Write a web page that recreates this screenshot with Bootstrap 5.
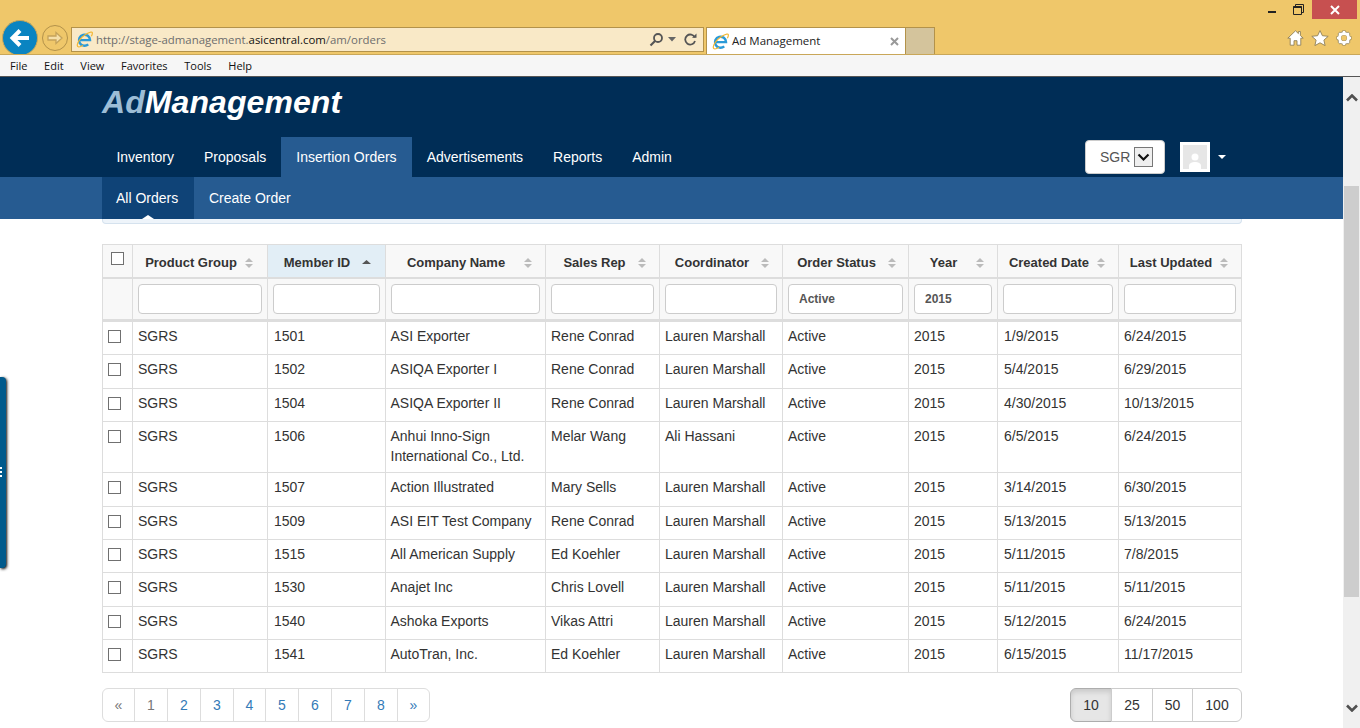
<!DOCTYPE html>
<html lang="en">
<head>
<meta charset="utf-8">
<title>Ad Management</title>
<link href="https://cdn.jsdelivr.net/npm/bootstrap@5.3.0/dist/css/bootstrap.min.css" rel="stylesheet">
<style>
html,body{height:728px;overflow:hidden}
body{font-family:"Liberation Sans",Arial,sans-serif;font-size:14px;color:#333;background:#fff}
.ie-top{background:#efc76a;height:55px;border-bottom:1px solid #c9a759;font-family:"Open Sans","Noto Sans",sans-serif;overflow:hidden}
.ie-winbar{height:27px;padding-right:3px}
.ie-min{width:8px;height:2px;background:#222;margin:11px 17px 0 0}
.ie-restore{margin:4px 8px 0 0}
.ie-close{width:45px;height:19px;background:#c75050;color:#fff}
.ie-addrow{height:27px}
.ie-back{width:36px;height:36px;border-radius:50%;background:#0a84c1;margin:-7px 0 0 2px;flex:none;border:1px solid #c9a759}
.ie-fwd{width:26px;height:26px;border-radius:50%;border:1px solid #b3924a;margin:-2px 3px 0 4px;flex:none}
.ie-addr{width:633px;height:25px;background:#f9e9c7;border:1px solid #b3924a;font-size:11.4px;color:#6d6d6d;padding:0 6px 0 4px;flex:none}
.ie-addr b{font-weight:400;color:#111}
.ie-addr .me-1,.ie-tab .me-1{margin-right:3px!important}
.ie-tab{width:200px;height:27px;background:#fff;border:1px solid #b3924a;border-bottom:0;margin-left:2px;font-size:11.5px;color:#222;padding:0 6px 0 5px;flex:none}
.ie-stub{width:29px;height:27px;background:#d4c49c;border:1px solid #b3924a;border-width:1px 1px 0 0;flex:none}
.ie-tools{margin-right:8px;gap:7px;padding-top:3px}
.ie-menu{height:22px;background:#f6f6f6;border-bottom:1px solid #555;font-family:"Open Sans","Noto Sans",sans-serif;font-size:11px;color:#111;padding:1px 0 0 10px;gap:16.7px}
.view-wrap{height:651px}
.page-main{width:1343px;flex:none;overflow:hidden;position:relative}
.scroll-rail{width:17px;flex:none;background:#f0f0f0}
.scroll-thumb{width:15px;height:411px;background:#cdcdcd;margin:84px 0 0 1px}
.scroll-up{height:25px;padding-top:17px}
.app-head{height:100px;background:#002d56;padding-left:101.4px}
.app-logo{height:60px;padding:6px 0 0 .6px;font-size:32px;line-height:39px;font-weight:700;font-style:italic;color:#fff;letter-spacing:.08px}
.app-logo span{color:#9cbdd6}
.app-nav{height:40px}
.app-nav a{display:block;padding:10px 15px;line-height:20px;color:#fff;text-decoration:none}
.app-nav a.here{background:#265b91}
.sgr-box{width:80px;height:34px;background:#fff;border:1px solid #ccc;border-radius:4px;color:#555;padding-left:14px;margin:3px 0 0 0;gap:4px}
.sgr-arrow{width:19px;height:20px;border:1px solid #777;background:#efefef}
.avatar{width:30px;height:30px;border:3px solid #fff;background:#e6e6e6;margin:5px 0 0 15px}
.av-caret{width:0;height:0;border:4.5px solid transparent;border-top-color:#fff;border-bottom:0;margin:18px 117px 0 8px}
.sub-nav{height:42px;background:#265b91;padding-left:102px}
.sub-nav a{display:block;padding:11px 15px;line-height:20px;color:#fff;text-decoration:none;position:relative;white-space:nowrap}
.sub-nav a.here{background:#0f4377;width:92px;padding-left:14px}
.sub-nav a.here::after{content:"";position:absolute;left:40px;bottom:0;border:6px solid transparent;border-top:0;border-bottom:4px solid #fff}
.panel-stub{height:5px;margin:0 101px 0 102px;background:#eef4fa;border:1px solid #d5e2ee;border-top:0;border-radius:0 0 4px 4px}
.grid-wrap{margin:20px 101px 0 102px}
.order-grid{table-layout:fixed;width:1139px;margin:0;color:#333;--bs-table-border-color:#ddd}
.order-grid col:nth-child(1){width:30px}
.order-grid col:nth-child(2){width:135px}
.order-grid col:nth-child(3){width:118px}
.order-grid col:nth-child(4){width:160px}
.order-grid col:nth-child(5){width:114px}
.order-grid col:nth-child(6){width:123px}
.order-grid col:nth-child(7){width:126px}
.order-grid col:nth-child(8){width:89px}
.order-grid col:nth-child(9){width:121px}
.order-grid col:nth-child(10){width:123px}
.order-grid th,.order-grid td{padding:0 5px;line-height:20px;vertical-align:top;border:1px solid #ddd}
.order-grid .head-row th{height:33px;background:#f8f8f8;font-weight:700;font-size:13px;vertical-align:middle;text-align:center;border-bottom:2px solid #ddd;white-space:nowrap;padding:5px 5px 0}
.order-grid .head-row th.sorted{background:#e2eef6}
.order-grid .filter-row th{height:43px;background:#f8f8f8;border-bottom:3px solid #ddd;vertical-align:middle;padding:1px 5px 0}
.order-grid tbody td{height:33.4px;padding:4px 5px 6px;white-space:nowrap}
.order-grid tbody tr:first-child td{height:34.4px}
.order-grid tbody tr:last-child td{height:32.4px}
.order-grid tbody td.wrap-cell{white-space:normal}
.order-grid tbody td:first-child{padding:8px 0 0 5px;line-height:1}
.order-grid tbody td:nth-child(3),.order-grid tbody td:nth-child(9){padding-left:6px}
.order-grid tbody td:nth-child(4){padding-left:4.500px}
.order-grid th:first-child{padding:0;text-align:center}
.sort-mark{display:inline-block;margin-left:8px;vertical-align:-1px}
.order-grid .head-row th:nth-child(2){padding-right:7px}
.order-grid .head-row th:nth-child(3){padding-left:7px}
.order-grid .head-row th:nth-child(4){padding-left:13px}
.order-grid .head-row th:nth-child(5){padding-left:9px}
.order-grid .head-row th:nth-child(6),.order-grid .head-row th:nth-child(7){padding-left:7px}
.order-grid .head-row th:nth-child(8){padding-left:13px}
.order-grid .head-row th:nth-child(9),.order-grid .head-row th:nth-child(10){padding-right:7px}
.head-row th:nth-child(3) .sort-mark{margin-left:12px}
.head-row th:nth-child(4) .sort-mark{margin-left:19px}
.head-row th:nth-child(5) .sort-mark,.head-row th:nth-child(6) .sort-mark{margin-left:12px}
.head-row th:nth-child(7) .sort-mark{margin-left:12px}
.head-row th:nth-child(8) .sort-mark{margin-left:19px}
.head-lab{display:inline-block}
.filter-input{display:block;width:100%;height:30px;border:1px solid #ccc;border-radius:4px;background:#fff;padding:0 10px;font:700 12px/28px "Liberation Sans",Arial,sans-serif;color:#555}
.tick{appearance:none;display:block;width:13px;height:13px;border:1px solid #707070;background:#fff;margin:0}
.head-tick{margin:-4px auto 0 8px}
.pager-row{margin-top:15px}
.pager-row .page-link{padding:6px 0;width:34px;margin-left:-1px;text-align:center;line-height:20px;font-size:14px;color:#337ab7;border-color:#ddd;background:#fff}
.pager-row .page-link.muted{color:#777}
.pager-row .page-link.first-link{width:33px;margin-left:0}
.pager-row .page-item:nth-child(5) .page-link,.pager-row .page-item:last-child .page-link{width:33px}
.size-btn{padding:6px 0;font-size:14px;line-height:20px;border:1px solid #ccc;color:#333;background:#fff;width:42px;flex:none}
.size-btn.narrow{width:41px}
.size-btn.wide{width:50px}
.size-btn.now{background:#e6e6e6;box-shadow:inset 0 3px 5px rgba(0,0,0,.125);border-color:#adadad}
.side-tab{position:absolute;left:0;top:300px;width:6px;height:191px;background:#005a8c;border-radius:0 4px 4px 0;box-shadow:1px 1px 3px #000}
.side-grip{position:absolute;left:0;top:90px;width:2px;height:10px;background:repeating-linear-gradient(#fff 0 2px,transparent 2px 4px)}
</style>
</head>
<body>
<div class="ie-top">
  <div class="ie-winbar d-flex justify-content-end align-items-start">
    <div class="ie-min"></div>
    <svg class="ie-restore" width="11" height="11" viewBox="0 0 11 11"><path d="M2.500 2V.5h8v8H9M.5 2.500h8v8h-8z" fill="none" stroke="#222" stroke-width="1"/><path d="M.5 3h8" stroke="#222" stroke-width="2"/></svg>
    <div class="ie-close d-flex align-items-center justify-content-center"><svg width="10" height="10" viewBox="0 0 10 10"><path d="M1 1l8 8M9 1l-8 8" stroke="#fff" stroke-width="2"/></svg></div>
  </div>
  <div class="ie-addrow d-flex align-items-start">
    <div class="ie-back d-flex align-items-center justify-content-center"><svg width="22" height="20" viewBox="0 0 22 20"><path d="M20 10H4M11 2.500L3.500 10l7.500 7.500" fill="none" stroke="#fff" stroke-width="4"/></svg></div>
    <div class="ie-fwd d-flex align-items-center justify-content-center"><svg width="16" height="14" viewBox="0 0 16 14"><path d="M1 5h8V1.500L15 7l-6 5.500V9H1z" fill="#f5dfa8" stroke="#c5a35a" stroke-width="1.300"/></svg></div>
    <div class="ie-addr d-flex align-items-center">
      <svg class="me-1" width="17" height="17" viewBox="0 0 16 16"><path d="M2.800 8.600h10.400A5.200 5.200 0 1 0 11.500 12.500" fill="none" stroke="#2a9ad8" stroke-width="2.300"/><path d="M1.500 14.500C0 12 5 4 14 1c2-.5 1.500 2 .5 4M1.500 14.500c1 1 3.500 0 5-1" fill="none" stroke="#f3b52c" stroke-width="1.100"/></svg>
      <span>http://stage-admanagement.<b>asicentral.com</b>/am/orders</span>
      <svg class="ms-auto" width="15" height="15" viewBox="0 0 15 15"><circle cx="9" cy="6" r="4" fill="none" stroke="#555" stroke-width="1.800"/><path d="M6 9l-4.500 4.500" stroke="#555" stroke-width="2.200"/></svg>
      <svg class="ms-1" width="8" height="5" viewBox="0 0 8 5"><path d="M0 0h8L4 4.500z" fill="#666"/></svg>
      <svg class="ms-2" width="13" height="13" viewBox="0 0 13 13"><path d="M10.800 4.500A5 5 0 1 0 11 8" fill="none" stroke="#555" stroke-width="1.800"/><path d="M8 4.800h4.500V.5z" fill="#555"/></svg>
    </div>
    <div class="ie-tab d-flex align-items-center">
      <svg class="me-1" width="17" height="17" viewBox="0 0 16 16"><path d="M2.800 8.600h10.400A5.200 5.200 0 1 0 11.500 12.500" fill="none" stroke="#2a9ad8" stroke-width="2.300"/><path d="M1.500 14.500C0 12 5 4 14 1c2-.5 1.500 2 .5 4M1.500 14.500c1 1 3.500 0 5-1" fill="none" stroke="#f3b52c" stroke-width="1.100"/></svg>
      <span>Ad Management</span>
      <svg class="ms-auto" width="9" height="9" viewBox="0 0 9 9"><path d="M1 1l7 7M8 1L1 8" stroke="#999" stroke-width="2"/></svg>
    </div>
    <div class="ie-stub"></div>
    <div class="ie-tools ms-auto d-flex align-items-center">
      <svg width="17" height="16" viewBox="0 0 17 16"><path d="M8.500.8L.8 8.200h2.400V15.200h3.800v-4.500h3v4.500h3.800V8.200h2.400l-2.800-2.700V1.500h-2v2.100z" fill="#fff" stroke="#8f8058" stroke-width=".9"/></svg>
      <svg width="18" height="16" viewBox="0 0 18 16"><path d="M9 .6l2.400 5.100 5.800.6-4.300 3.800 1.200 5.500L9 12.800l-5.100 2.800 1.200-5.500L.8 6.300l5.800-.6z" fill="#fff" stroke="#8f8058" stroke-width=".9"/></svg>
      <svg width="16" height="16" viewBox="0 0 16 16"><circle cx="8" cy="8" r="4.800" fill="none" stroke="#8f8058" stroke-width="4"/><path d="M8 .5v3M8 12.500v3M.5 8h3M12.500 8h3M2.700 2.700l2.200 2.200M11.100 11.100l2.200 2.200M2.700 13.300l2.200-2.200M11.100 4.900l2.200-2.200" stroke="#8f8058" stroke-width="3.400"/><circle cx="8" cy="8" r="4.600" fill="none" stroke="#fff" stroke-width="3"/><path d="M8 1v3M8 12v3M1 8h3M12 8h3M3.100 3.100l2 2M10.900 10.900l2 2M3.100 12.900l2-2M10.900 5.100l2-2" stroke="#fff" stroke-width="2.500"/></svg>
    </div>
  </div>
</div>
<div class="ie-menu d-flex align-items-center"><span>File</span><span>Edit</span><span>View</span><span>Favorites</span><span>Tools</span><span>Help</span></div>
<div class="view-wrap d-flex">
  <div class="page-main">
    <header class="app-head">
      <div class="app-logo"><span>Ad</span>Management</div>
      <div class="app-nav d-flex">
        <a href="#">Inventory</a><a href="#">Proposals</a><a href="#" class="here">Insertion Orders</a><a href="#">Advertisements</a><a href="#">Reports</a><a href="#">Admin</a>
        <div class="ms-auto d-flex align-items-start">
          <div class="sgr-box d-flex align-items-center"><span>SGR</span><span class="sgr-arrow d-flex align-items-center justify-content-center"><svg width="13" height="9" viewBox="0 0 13 9"><path d="M1.500 1.500l5 5 5-5" fill="none" stroke="#111" stroke-width="2.200"/></svg></span></div>
          <div class="avatar d-flex align-items-end justify-content-center"><svg width="14" height="18" viewBox="0 0 14 18"><circle cx="7" cy="6" r="3.500" fill="#fff"/><path d="M1 18v-3c0-3 3-4 6-4s6 1 6 4v3z" fill="#fff"/></svg></div>
          <div class="av-caret"></div>
        </div>
      </div>
    </header>
    <nav class="sub-nav d-flex"><a href="#" class="here">All Orders</a><a href="#">Create Order</a></nav>
    <div class="panel-stub"></div>
    <div class="grid-wrap">
      <table class="table table-bordered order-grid">
        <colgroup><col><col><col><col><col><col><col><col><col><col></colgroup>
        <thead>
          <tr class="head-row">
            <th><input class="tick head-tick" type="checkbox" aria-label="Select all"></th>
            <th><span class="head-lab">Product Group</span><svg class="sort-mark" width="8" height="10" viewBox="0 0 8 10"><path d="M4 0l4 4H0zM4 10L0 6h8z" fill="#bbb"/></svg></th>
            <th class="sorted"><span class="head-lab">Member ID</span><svg class="sort-mark" width="9" height="10" viewBox="0 0 9 10"><path d="M4.500 2l4.500 4H0z" fill="#555"/></svg></th>
            <th><span class="head-lab">Company Name</span><svg class="sort-mark" width="8" height="10" viewBox="0 0 8 10"><path d="M4 0l4 4H0zM4 10L0 6h8z" fill="#bbb"/></svg></th>
            <th><span class="head-lab">Sales Rep</span><svg class="sort-mark" width="8" height="10" viewBox="0 0 8 10"><path d="M4 0l4 4H0zM4 10L0 6h8z" fill="#bbb"/></svg></th>
            <th><span class="head-lab">Coordinator</span><svg class="sort-mark" width="8" height="10" viewBox="0 0 8 10"><path d="M4 0l4 4H0zM4 10L0 6h8z" fill="#bbb"/></svg></th>
            <th><span class="head-lab">Order Status</span><svg class="sort-mark" width="8" height="10" viewBox="0 0 8 10"><path d="M4 0l4 4H0zM4 10L0 6h8z" fill="#bbb"/></svg></th>
            <th><span class="head-lab">Year</span><svg class="sort-mark" width="8" height="10" viewBox="0 0 8 10"><path d="M4 0l4 4H0zM4 10L0 6h8z" fill="#bbb"/></svg></th>
            <th><span class="head-lab">Created Date</span><svg class="sort-mark" width="8" height="10" viewBox="0 0 8 10"><path d="M4 0l4 4H0zM4 10L0 6h8z" fill="#bbb"/></svg></th>
            <th><span class="head-lab">Last Updated</span><svg class="sort-mark" width="8" height="10" viewBox="0 0 8 10"><path d="M4 0l4 4H0zM4 10L0 6h8z" fill="#bbb"/></svg></th>
          </tr>
          <tr class="filter-row">
            <th></th>
            <th><input class="filter-input" aria-label="Product Group"></th>
            <th><input class="filter-input" aria-label="Member ID"></th>
            <th><input class="filter-input" aria-label="Company Name"></th>
            <th><input class="filter-input" aria-label="Sales Rep"></th>
            <th><input class="filter-input" aria-label="Coordinator"></th>
            <th><input class="filter-input" aria-label="Order Status" value="Active"></th>
            <th><input class="filter-input" aria-label="Year" value="2015"></th>
            <th><input class="filter-input" aria-label="Created Date"></th>
            <th><input class="filter-input" aria-label="Last Updated"></th>
          </tr>
        </thead>
        <tbody>
          <tr><td><input class="tick" type="checkbox" aria-label="Select"></td><td>SGRS</td><td>1501</td><td>ASI Exporter</td><td>Rene Conrad</td><td>Lauren Marshall</td><td>Active</td><td>2015</td><td>1/9/2015</td><td>6/24/2015</td></tr>
          <tr><td><input class="tick" type="checkbox" aria-label="Select"></td><td>SGRS</td><td>1502</td><td>ASIQA Exporter I</td><td>Rene Conrad</td><td>Lauren Marshall</td><td>Active</td><td>2015</td><td>5/4/2015</td><td>6/29/2015</td></tr>
          <tr><td><input class="tick" type="checkbox" aria-label="Select"></td><td>SGRS</td><td>1504</td><td>ASIQA Exporter II</td><td>Rene Conrad</td><td>Lauren Marshall</td><td>Active</td><td>2015</td><td>4/30/2015</td><td>10/13/2015</td></tr>
          <tr><td><input class="tick" type="checkbox" aria-label="Select"></td><td>SGRS</td><td>1506</td><td class="wrap-cell">Anhui Inno-Sign International Co., Ltd.</td><td>Melar Wang</td><td>Ali Hassani</td><td>Active</td><td>2015</td><td>6/5/2015</td><td>6/24/2015</td></tr>
          <tr><td><input class="tick" type="checkbox" aria-label="Select"></td><td>SGRS</td><td>1507</td><td>Action Illustrated</td><td>Mary Sells</td><td>Lauren Marshall</td><td>Active</td><td>2015</td><td>3/14/2015</td><td>6/30/2015</td></tr>
          <tr><td><input class="tick" type="checkbox" aria-label="Select"></td><td>SGRS</td><td>1509</td><td>ASI EIT Test Company</td><td>Rene Conrad</td><td>Lauren Marshall</td><td>Active</td><td>2015</td><td>5/13/2015</td><td>5/13/2015</td></tr>
          <tr><td><input class="tick" type="checkbox" aria-label="Select"></td><td>SGRS</td><td>1515</td><td>All American Supply</td><td>Ed Koehler</td><td>Lauren Marshall</td><td>Active</td><td>2015</td><td>5/11/2015</td><td>7/8/2015</td></tr>
          <tr><td><input class="tick" type="checkbox" aria-label="Select"></td><td>SGRS</td><td>1530</td><td>Anajet Inc</td><td>Chris Lovell</td><td>Lauren Marshall</td><td>Active</td><td>2015</td><td>5/11/2015</td><td>5/11/2015</td></tr>
          <tr><td><input class="tick" type="checkbox" aria-label="Select"></td><td>SGRS</td><td>1540</td><td>Ashoka Exports</td><td>Vikas Attri</td><td>Lauren Marshall</td><td>Active</td><td>2015</td><td>5/12/2015</td><td>6/24/2015</td></tr>
          <tr><td><input class="tick" type="checkbox" aria-label="Select"></td><td>SGRS</td><td>1541</td><td>AutoTran, Inc.</td><td>Ed Koehler</td><td>Lauren Marshall</td><td>Active</td><td>2015</td><td>6/15/2015</td><td>11/17/2015</td></tr>
        </tbody>
      </table>
      <div class="pager-row d-flex justify-content-between">
        <ul class="pagination m-0">
          <li class="page-item"><a class="page-link muted first-link" href="#">«</a></li>
          <li class="page-item"><a class="page-link muted" href="#">1</a></li>
          <li class="page-item"><a class="page-link" href="#">2</a></li>
          <li class="page-item"><a class="page-link" href="#">3</a></li>
          <li class="page-item"><a class="page-link" href="#">4</a></li>
          <li class="page-item"><a class="page-link" href="#">5</a></li>
          <li class="page-item"><a class="page-link" href="#">6</a></li>
          <li class="page-item"><a class="page-link" href="#">7</a></li>
          <li class="page-item"><a class="page-link" href="#">8</a></li>
          <li class="page-item"><a class="page-link" href="#">»</a></li>
        </ul>
        <div class="btn-group">
          <button type="button" class="btn size-btn now">10</button>
          <button type="button" class="btn size-btn">25</button>
          <button type="button" class="btn size-btn narrow">50</button>
          <button type="button" class="btn size-btn wide">100</button>
        </div>
      </div>
    </div>
    <div class="side-tab"><div class="side-grip"></div></div>
  </div>
  <div class="scroll-rail d-flex flex-column">
    <div class="scroll-up"><svg class="d-block mx-auto" width="12" height="8" viewBox="0 0 12 8"><path d="M1 6.500l5-5 5 5" fill="none" stroke="#505050" stroke-width="2.600"/></svg></div>
    <div class="scroll-thumb"></div>
    <div class="mt-auto pb-3"><svg class="d-block mx-auto" width="12" height="8" viewBox="0 0 12 8"><path d="M1 1.500l5 5 5-5" fill="none" stroke="#505050" stroke-width="2.600"/></svg></div>
  </div>
</div>
<script src="https://cdn.jsdelivr.net/npm/bootstrap@5.3.0/dist/js/bootstrap.bundle.min.js"></script>
</body>
</html>
